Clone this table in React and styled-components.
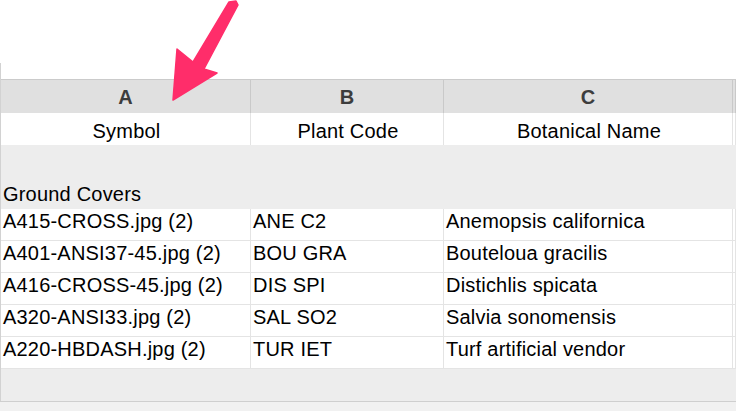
import React from "react";
import styled, { createGlobalStyle } from "styled-components";

const GlobalStyle = createGlobalStyle`
  body {
    margin: 0;
    background: #ffffff;
    font-family: "Liberation Sans", Arial, sans-serif;
  }
`;

const Page = styled.div`
  position: relative;
  display: flex;
  flex-direction: column;
  width: 736px;
  height: 411px;
  overflow: hidden;
  background: #ffffff;
`;

const TopSpace = styled.div`
  height: 63px;
  flex-shrink: 0;
`;

const Sheet = styled.div`
  display: flex;
  flex-direction: column;
  border-left: 1px solid #d2d2d2;
  flex-shrink: 0;
`;

const SheetGap = styled.div`
  height: 16px;
`;

const Row = styled.div`
  display: grid;
  grid-template-columns: 250px 193px 289px 1fr;
  height: ${({ $h }) => $h}px;
  background: ${({ $bg }) => $bg || "#ffffff"};
  border-top: ${({ $top }) => ($top ? "1px solid #cbcbcb" : "none")};
  border-bottom: ${({ $sep }) => ($sep ? "1px solid #e4e4e4" : "none")};
  box-sizing: ${({ $sep }) => ($sep ? "border-box" : "content-box")};
`;

const HeadCell = styled.div`
  border-right: 1px solid #c9c9c9;
  padding-top: 5px;
  text-align: center;
  font-size: 20px;
  line-height: 24px;
  font-weight: bold;
  color: #3d3d3d;
  overflow: hidden;
`;

const Cell = styled.div`
  border-right: 1px solid #e4e4e4;
  padding: ${({ $pt }) => $pt || 0}px 0 0 2px;
  text-align: ${({ $center }) => ($center ? "center" : "left")};
  font-size: 20px;
  line-height: 24px;
  letter-spacing: 0.2px;
  color: #000000;
  white-space: nowrap;
  overflow: hidden;
`;

const Band = styled.div`
  height: ${({ $h }) => $h}px;
  background: #ededed;
  padding: ${({ $pt }) => $pt || 0}px 0 0 2px;
  font-size: 20px;
  line-height: 24px;
  letter-spacing: 0.2px;
  color: #000000;
  box-sizing: border-box;
`;

const Footer = styled.div`
  flex: 1;
  border-top: 1px solid #cfcfcf;
  background: #f1f1f1;
`;

const ArrowSvg = styled.svg`
  position: absolute;
  left: 0;
  top: 0;
  pointer-events: none;
`;

const plants = [
  ["A415-CROSS.jpg (2)", "ANE C2", "Anemopsis californica"],
  ["A401-ANSI37-45.jpg (2)", "BOU GRA", "Bouteloua gracilis"],
  ["A416-CROSS-45.jpg (2)", "DIS SPI", "Distichlis spicata"],
  ["A320-ANSI33.jpg (2)", "SAL SO2", "Salvia sonomensis"],
  ["A220-HBDASH.jpg (2)", "TUR IET", "Turf artificial vendor"],
];

function Arrow() {
  return (
    <ArrowSvg width="736" height="120" viewBox="0 0 736 120">
      <polygon
        points="173,100 177,49 193,62 229,2 236,1 238,5 204,69 217,73"
        fill="#ff2d6a"
        stroke="#ff2d6a"
        strokeWidth="1.5"
        strokeLinejoin="round"
      />
    </ArrowSvg>
  );
}

export default function App() {
  return (
    <Page>
      <GlobalStyle />
      <TopSpace />
      <Sheet>
        <SheetGap />
        <Row $h={33} $bg="#e0e0e0" $top>
          <HeadCell>A</HeadCell>
          <HeadCell>B</HeadCell>
          <HeadCell>C</HeadCell>
          <HeadCell />
        </Row>
        <Row $h={32}>
          <Cell $center $pt={6}>Symbol</Cell>
          <Cell $center $pt={6}>Plant Code</Cell>
          <Cell $center $pt={6}>Botanical Name</Cell>
          <Cell />
        </Row>
        <Band $h={64} $pt={37}>Ground Covers</Band>
        {plants.map(([sym, code, name]) => (
          <Row key={sym} $h={32} $sep>
            <Cell>{sym}</Cell>
            <Cell>{code}</Cell>
            <Cell>{name}</Cell>
            <Cell />
          </Row>
        ))}
        <Band $h={32} />
      </Sheet>
      <Footer />
      <Arrow />
    </Page>
  );
}
